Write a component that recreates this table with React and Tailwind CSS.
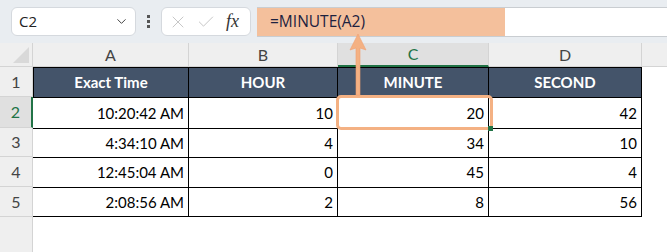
import { ChevronDown, X, Check } from 'lucide-react'

const cols = ['A', 'B', 'C', 'D']
const heads = ['Exact Time', 'HOUR', 'MINUTE', 'SECOND']
const rows = [
  ['10:20:42 AM', 10, 20, 42],
  ['4:34:10 AM', 4, 34, 10],
  ['12:45:04 AM', 0, 45, 4],
  ['2:08:56 AM', 2, 8, 56],
]

const Toolbar = () => (
  <div className="flex h-[43px] items-center bg-[#e9edf1] pl-[11px]" style={{ fontFamily: '"Open Sans", "Noto Sans", sans-serif' }}>
    <div className="flex h-[29px] w-[125px] items-center justify-between rounded-[6px] border border-[#d5d9de] bg-white pl-[7px] pr-[6px] text-[15px] text-[#222]">
      <span>C2</span>
      <ChevronDown size={15} strokeWidth={1.6} className="text-[#444]" />
    </div>
    <div className="mx-[11px] flex flex-col gap-[2px]">
      <span className="h-[3px] w-[3px] bg-[#555]" />
      <span className="h-[3px] w-[3px] bg-[#555]" />
      <span className="h-[3px] w-[3px] bg-[#555]" />
    </div>
    <div className="flex h-[29px] w-[90px] items-center rounded-[6px] border border-[#d5d9de] bg-white pl-[6px]">
      <X size={20} strokeWidth={1} className="text-[#bcbcbc]" />
      <Check size={20} strokeWidth={1} className="ml-[8px] text-[#bcbcbc]" />
      <span className="ml-[10px] text-[18px] italic text-[#333]" style={{ fontFamily: '"Liberation Serif", serif' }}>fx</span>
    </div>
    <div className="ml-[6px] flex h-[30px] flex-1 border-y border-[#c9cdd1] bg-white">
      <div className="flex w-[248px] items-center bg-[#f4c09c] pl-[13px] text-[15.5px] text-[#1c2240]">=MINUTE(A2)</div>
    </div>
  </div>
)

const Sheet = () => (
  <div
    className="relative grid h-[209px] grid-cols-[33px_156px_149px_151px_153px_1fr] grid-rows-[24px_30px_31px_29px_30px_30px_1fr] bg-white text-[15px]"
    style={{ fontFamily: 'Lato, "Liberation Sans", sans-serif' }}
  >
    {/* corner */}
    <div className="flex items-end justify-end border-b border-r border-[#d4d4d4] bg-[#efefef] p-[3px]">
      <svg width="16" height="16" viewBox="0 0 16 16">
        <path d="M16 0 L16 16 L0 16 Z" fill="#d9d9d9" />
      </svg>
    </div>
    {cols.map((c) => (
      <div
        key={c}
        className={
          c === 'C'
            ? 'flex items-center justify-center border-b-2 border-r border-b-[#217346] border-r-[#d4d4d4] bg-[#e0e0e0] text-[16px] text-[#217346]'
            : 'flex items-center justify-center border-b border-r border-[#d4d4d4] bg-[#efefef] text-[16px] text-[#444]'
        }
      >
        {c}
      </div>
    ))}
    <div className="border-b border-[#d4d4d4] bg-[#efefef]" />

    {/* header row */}
    <div className="flex items-center justify-center border-b border-r border-[#d4d4d4] bg-[#efefef] text-[16px] text-[#444]">1</div>
    {heads.map((h, i) => (
      <div
        key={h}
        className={`flex items-center justify-center border-r border-t border-black bg-[#44546a] font-bold text-white ${i === 0 ? 'border-l' : ''}`}
      >
        {h}
      </div>
    ))}
    <div />

    {rows.map((r, ri) => (
      <div key={ri} className="contents">
        <div
          className={
            ri === 0
              ? 'flex items-center justify-center border-b border-r-2 border-b-[#d4d4d4] border-r-[#217346] bg-[#e0e0e0] text-[16px] text-[#217346]'
              : 'flex items-center justify-center border-b border-r border-[#d4d4d4] bg-[#efefef] text-[16px] text-[#444]'
          }
        >
          {ri + 2}
        </div>
        {r.map((v, ci) => (
          <div
            key={ci}
            className={`flex items-center justify-end border-r border-t border-black pr-[4px] text-black ${ri === rows.length - 1 ? 'border-b' : ''}`}
          >
            {v}
          </div>
        ))}
        <div />
      </div>
    ))}

    <div className="border-r border-[#d4d4d4] bg-[#efefef]" />
    <div className="col-span-5" />

    {/* selection outline around C2 */}
    <div className="absolute left-[336px] top-[52px] h-[35px] w-[157px] rounded-[5px] border-[3px] border-[#f4b183]" />
    <div className="absolute left-[488px] top-[83px] h-[5px] w-[5px] bg-[#217346]" />
  </div>
)

export default function App() {
  return (
    <div className="relative h-[252px] w-[667px] overflow-hidden bg-white">
      <Toolbar />
      <Sheet />
      {/* arrow from formula to cell */}
      <svg className="absolute left-[347px] top-[33px]" width="22" height="64" viewBox="0 0 22 64">
        <path d="M11 1 L19 17 L13 15 L13 62 L9 62 L9 15 L3 17 Z" fill="#f4b183" stroke="#f0a070" strokeWidth="0.6" />
      </svg>
    </div>
  )
}
